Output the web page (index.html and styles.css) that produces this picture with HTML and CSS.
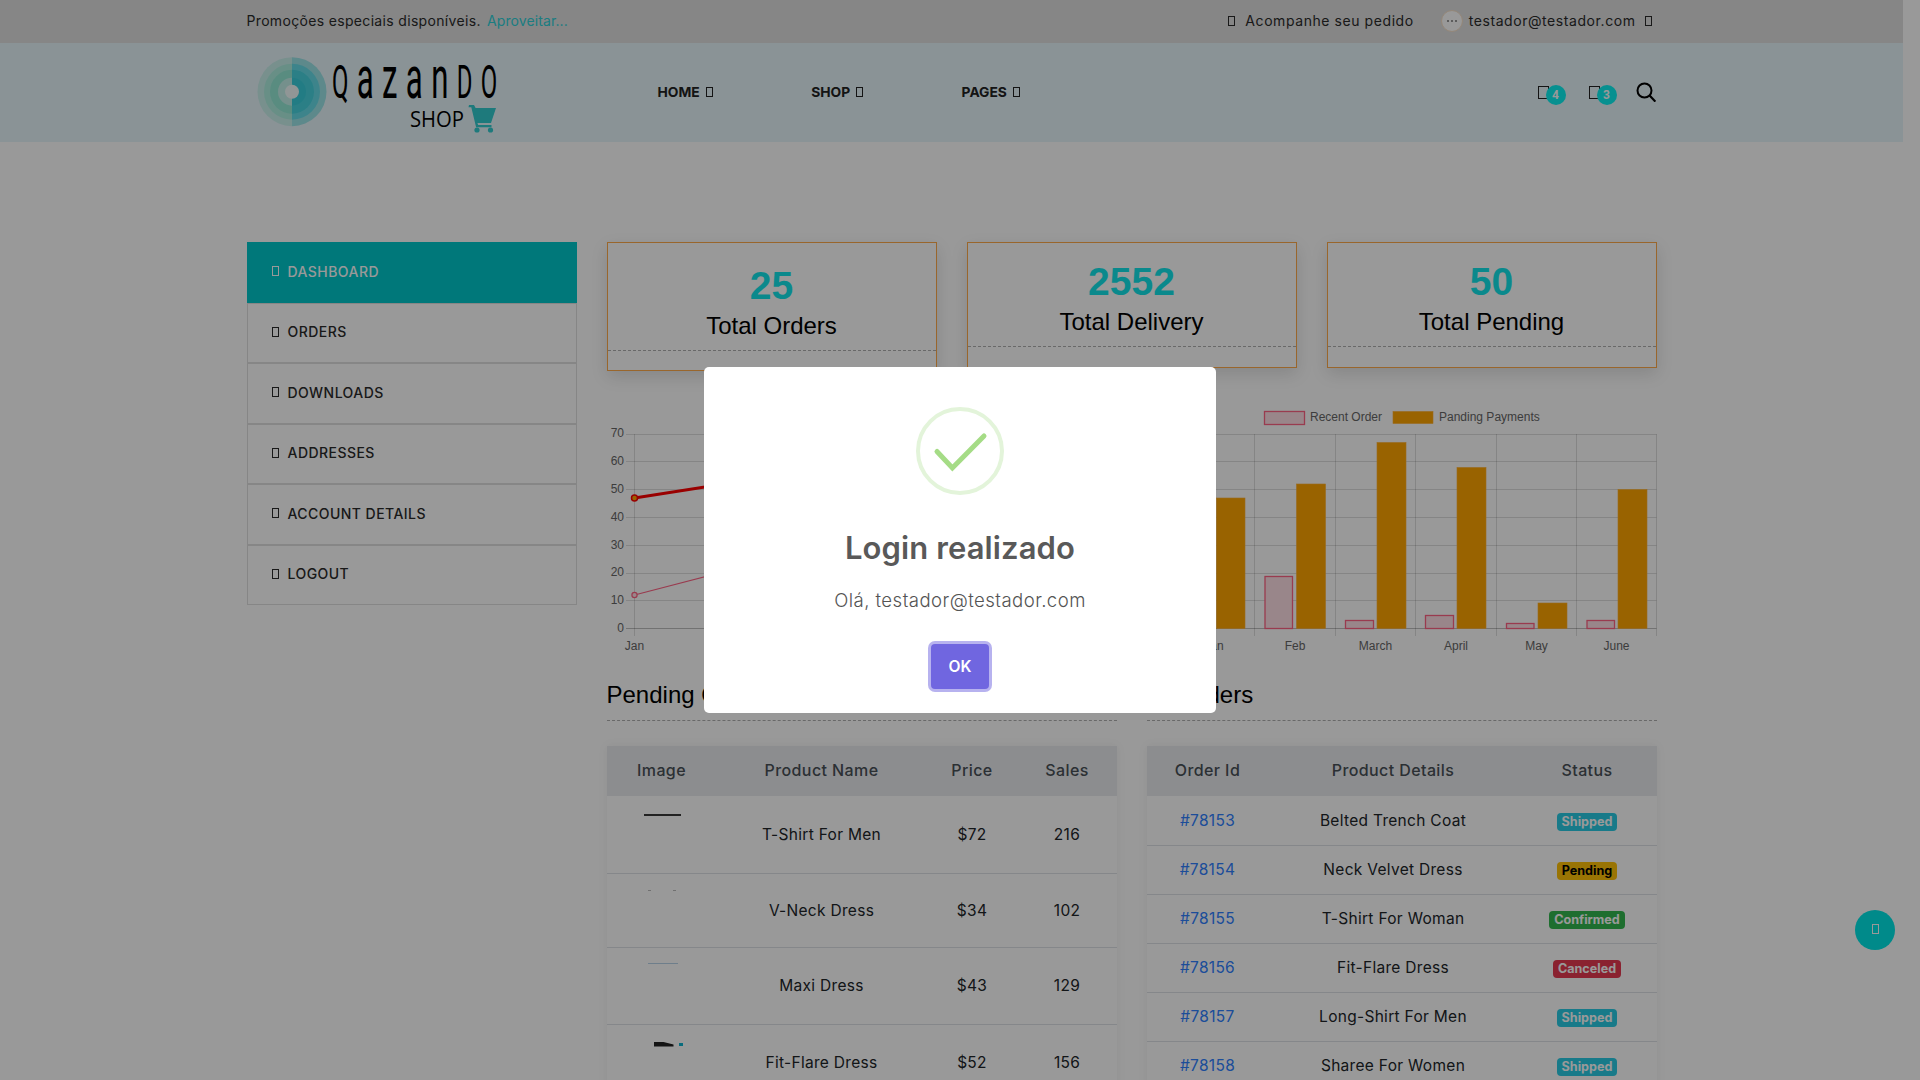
FILE: index.html
```html
<!DOCTYPE html>
<html lang="pt-BR">
<head>
<meta charset="utf-8">
<title>Qazando Shop - Dashboard</title>
<link rel="stylesheet" href="styles.css">
</head>
<body>
<div class="page">
  <div class="topbar">
    <div class="container topbar-row">
      <p class="promo">Promoções especiais disponíveis. <a class="promo-link">Aproveitar...</a></p>
      <div class="top-right">
        <span class="top-item"><i class="tofu"></i>Acompanhe seu pedido</span>
        <span class="top-item user"><span class="avatar"><b></b></span>testador@testador.com<i class="tofu"></i></span>
      </div>
    </div>
  </div>
  <header class="header">
    <div class="container header-row">
      <a class="logo">
        <svg class="logo-svg" viewBox="250 50 260 90" width="260" height="90">
          <defs>
            <clipPath id="halfL"><rect x="250" y="50" width="42" height="90"/></clipPath>
            <clipPath id="halfR"><rect x="292" y="50" width="50" height="90"/></clipPath>
          </defs>
          <g clip-path="url(#halfL)">
            <circle class="l1" cx="292" cy="91.7" r="34.5"/><circle class="l2" cx="292" cy="91.7" r="28"/><circle class="l3" cx="292" cy="91.7" r="22"/><circle class="l4" cx="292" cy="91.7" r="14"/><circle class="l5" cx="292" cy="91.7" r="7"/>
          </g>
          <g clip-path="url(#halfR)">
            <circle class="r1" cx="292" cy="91.7" r="34.5"/><circle class="r2" cx="292" cy="91.7" r="28"/><circle class="r3" cx="292" cy="91.7" r="22"/><circle class="r4" cx="292" cy="91.7" r="14"/><circle class="l5" cx="292" cy="91.7" r="7"/>
          </g>
          <g transform="translate(332 98) scale(.52 1)">
            <text class="logo-word"><tspan class="cap">Q</tspan><tspan class="low">aza</tspan><tspan class="low">n</tspan><tspan class="cap">DO</tspan></text>
          </g>
          <text class="logo-shop" x="410" y="127" textLength="54" lengthAdjust="spacingAndGlyphs">SHOP</text>
          <path class="logo-cart" d="M469 105h5l1.6 3h20.4l-5 15h-13.6l.8 2h13.3v2.2h-15.4l-4.8-20h-2.8z"/>
          <circle class="logo-cart" cx="477" cy="130" r="2.6"/><circle class="logo-cart" cx="490.5" cy="130" r="2.6"/>
        </svg>
      </a>
      <nav class="nav">
        <a class="nav-item">HOME<i class="tofu"></i></a>
        <a class="nav-item">SHOP<i class="tofu"></i></a>
        <a class="nav-item">PAGES<i class="tofu"></i></a>
      </nav>
      <div class="tools">
        <span class="tool"><i class="tofu tofu-lg"></i><b class="count">4</b></span>
        <span class="tool"><i class="tofu tofu-lg"></i><b class="count">3</b></span>
        <svg class="search" viewBox="0 0 20 20" width="20" height="20"><circle cx="8.5" cy="8.5" r="7" fill="none" stroke="#000" stroke-width="2"/><path d="M13.6 13.6 19.4 19.6" stroke="#000" stroke-width="2.2" fill="none"/></svg>
      </div>
    </div>
  </header>

  <main class="container dash">
    <aside class="side">
      <a class="side-item active"><i class="tofu"></i>DASHBOARD</a>
      <a class="side-item"><i class="tofu"></i>ORDERS</a>
      <a class="side-item"><i class="tofu"></i>DOWNLOADS</a>
      <a class="side-item"><i class="tofu"></i>ADDRESSES</a>
      <a class="side-item"><i class="tofu"></i>ACCOUNT DETAILS</a>
      <a class="side-item"><i class="tofu"></i>LOGOUT</a>
    </aside>
    <section class="content">
      <div class="cards">
        <div class="card card-first"><div class="card-body"><h2>25</h2><h3>Total Orders</h3></div></div>
        <div class="card"><div class="card-body"><h2>2552</h2><h3>Total Delivery</h3></div></div>
        <div class="card"><div class="card-body"><h2>50</h2><h3>Total Pending</h3></div></div>
      </div>

      <div class="charts">
        <svg class="chart" viewBox="607 400 510 260" width="510" height="260">
          <g class="grid">
            <path d="M626 434.5H1117M626 461.5H1117M626 489.5H1117M626 517.5H1117M626 545.5H1117M626 573.5H1117M626 600.5H1117"/>
            <path d="M634.5 434V636M1117 434V636"/>
          </g>
          <path class="axis" d="M626 628.5H1117"/>
          <g class="ticks">
            <text x="624" y="437">70</text><text x="624" y="465">60</text><text x="624" y="493">50</text><text x="624" y="521">40</text><text x="624" y="549">30</text><text x="624" y="576">20</text><text x="624" y="604">10</text><text x="624" y="632">0</text>
          </g>
          <text class="xlabel" x="634.5" y="650">Jan</text>
          <path class="line-pink" d="M634.5 595 L800 552"/>
          <circle class="pt-pink" cx="634.5" cy="595" r="2.6"/>
          <path class="line-red" d="M634.5 498 L800 472"/>
          <circle class="pt-red" cx="634.5" cy="498" r="3"/>
        </svg>
        <svg class="chart" viewBox="1147 400 510 260" width="510" height="260">
          <rect class="leg-pink" x="1264.5" y="411.5" width="40" height="13"/>
          <text class="legend" x="1310" y="421">Recent Order</text>
          <rect class="bar-orange" x="1393" y="411.5" width="40" height="12"/>
          <text class="legend" x="1439" y="421">Panding Payments</text>
          <g class="grid">
            <path d="M1167 434.5H1656.5M1167 461.5H1656.5M1167 489.5H1656.5M1167 517.5H1656.5M1167 545.5H1656.5M1167 573.5H1656.5M1167 600.5H1656.5"/>
            <path d="M1174.5 434V636M1254.5 434V636M1335.5 434V636M1415.5 434V636M1496.5 434V636M1576.5 434V636M1656.5 434V636"/>
          </g>
          <path class="axis" d="M1167 628.5H1656.5"/>
          <rect class="bar-pink" x="1185" y="595" width="28" height="33.5"/>
          <rect class="bar-orange" x="1216.5" y="498" width="28.5" height="130.5"/>
          <rect class="bar-pink" x="1265" y="576.5" width="27.5" height="52"/>
          <rect class="bar-orange" x="1296.5" y="484" width="29" height="144.5"/>
          <rect class="bar-pink" x="1345.5" y="620.5" width="28" height="8"/>
          <rect class="bar-orange" x="1377" y="442.5" width="29" height="186"/>
          <rect class="bar-pink" x="1425.5" y="615.5" width="28" height="13"/>
          <rect class="bar-orange" x="1457" y="467.5" width="29" height="161"/>
          <rect class="bar-pink" x="1506.5" y="623.5" width="27.5" height="5"/>
          <rect class="bar-orange" x="1538" y="603" width="29" height="25.5"/>
          <rect class="bar-pink" x="1587" y="620.5" width="27.5" height="8"/>
          <rect class="bar-orange" x="1618" y="489.5" width="29" height="139"/>
          <text class="xlabel" x="1214" y="650">Jan</text><text class="xlabel" x="1295" y="650">Feb</text><text class="xlabel" x="1375.5" y="650">March</text><text class="xlabel" x="1456" y="650">April</text><text class="xlabel" x="1536.5" y="650">May</text><text class="xlabel" x="1616.5" y="650">June</text>
        </svg>
      </div>

      <div class="tables">
        <div class="panel">
          <h4 class="panel-title">Pending Orders</h4>
          <table class="tbl tbl-products">
            <colgroup><col class="c-img"><col class="c-name"><col class="c-price"><col class="c-sales"></colgroup>
            <thead><tr><th>Image</th><th>Product Name</th><th>Price</th><th>Sales</th></tr></thead>
            <tbody>
              <tr class="r-a"><td class="thumb"><i class="stub stub-dark"></i></td><td>T-Shirt For Men</td><td>$72</td><td>216</td></tr>
              <tr class="r-b"><td class="thumb"><i class="stub stub-dots"></i></td><td>V-Neck Dress</td><td>$34</td><td>102</td></tr>
              <tr class="r-c"><td class="thumb"><i class="stub stub-blue"></i></td><td>Maxi Dress</td><td>$43</td><td>129</td></tr>
              <tr class="r-c"><td class="thumb"><i class="stub stub-wedge"></i><i class="stub stub-dot"></i></td><td>Fit-Flare Dress</td><td>$52</td><td>156</td></tr>
            </tbody>
          </table>
        </div>
        <div class="panel">
          <h4 class="panel-title">All Orders</h4>
          <table class="tbl tbl-orders">
            <colgroup><col class="c-id"><col class="c-det"><col class="c-st"></colgroup>
            <thead><tr><th>Order Id</th><th>Product Details</th><th>Status</th></tr></thead>
            <tbody>
              <tr><td><a class="oid">#78153</a></td><td>Belted Trench Coat</td><td><span class="badge b-info">Shipped</span></td></tr>
              <tr><td><a class="oid">#78154</a></td><td>Neck Velvet Dress</td><td><span class="badge b-warn">Pending</span></td></tr>
              <tr><td><a class="oid">#78155</a></td><td>T-Shirt For Woman</td><td><span class="badge b-ok">Confirmed</span></td></tr>
              <tr><td><a class="oid">#78156</a></td><td>Fit-Flare Dress</td><td><span class="badge b-bad">Canceled</span></td></tr>
              <tr><td><a class="oid">#78157</a></td><td>Long-Shirt For Men</td><td><span class="badge b-info">Shipped</span></td></tr>
              <tr><td><a class="oid">#78158</a></td><td>Sharee For Women</td><td><span class="badge b-info">Shipped</span></td></tr>
            </tbody>
          </table>
        </div>
      </div>
    </section>
  </main>
  <a class="to-top"><i class="tofu"></i></a>
</div>

<div class="overlay">
  <div class="modal">
    <svg class="success" viewBox="0 0 88 88" width="88" height="88">
      <circle cx="44" cy="44" r="42" fill="none" stroke="#e3f4da" stroke-width="4"/>
      <path d="M21 44.5 L36.4 61 L68 29" fill="none" stroke="#a5dc86" stroke-width="5" stroke-linecap="round" stroke-linejoin="miter"/>
    </svg>
    <h2 class="modal-title">Login realizado</h2>
    <p class="modal-text">Olá, testador@testador.com</p>
    <button class="ok">OK</button>
  </div>
</div>
</body>
</html>
```

FILE: styles.css
```css
* { box-sizing: border-box; }
html, body { margin: 0; height: 100%; overflow: hidden; background: #fff; }
body { font-family: Inter, "Noto Sans", sans-serif; color: #333; }
h2, h3, h4, p { margin: 0; font-weight: 400; }
.page { width: 1903px; height: 1080px; overflow: hidden; position: relative; }
.container { width: 1410px; margin: 0 auto; }

.tofu { display: inline-block; width: 7px; height: 10px; border: 1px solid currentColor; flex: none; }
.tofu-lg { width: 11px; height: 13px; }

.topbar { height: 43px; background: #dfdfdf; font-size: 14px; letter-spacing: .33px; }
.topbar-row { height: 100%; display: flex; align-items: center; justify-content: space-between; padding-bottom: 2px; }
.promo { color: #2b2b2b; }
.promo-link { color: #2ed0d8; margin-left: 2px; letter-spacing: .1px; }
.top-right { display: flex; align-items: center; gap: 27px; padding-right: 5px; color: #2b2b2b; letter-spacing: .57px; }
.top-item { display: flex; align-items: center; gap: 10px; }
.user { gap: 6px; }
.user .tofu { margin-left: 3px; }
.avatar { flex: none; width: 22px; height: 22px; border-radius: 50%; background: #fff; border: 1px solid #f6e0c8; display: flex; align-items: center; justify-content: center; }
.avatar b { width: 10px; height: 2px; border-top: 2px dotted #999; }

.header { height: 99px; background: #e6f5fa; }
.header-row { height: 100%; display: flex; align-items: center; }
.logo { flex: 0 0 411px; height: 90px; margin-top: 5px; padding-left: 3px; }
.logo-svg { display: block; overflow: visible; }
.l1 { fill: #c8f0ec; } .l2 { fill: #aeeee0; } .l3 { fill: #94ead6; } .l4 { fill: #c4f0ea; } .l5 { fill: #f0fbfa; }
.r1 { fill: #9ce4e8; } .r2 { fill: #67dde8; } .r3 { fill: #48d4e0; } .r4 { fill: #3acfdc; }
.logo-word { font-family: Roboto, sans-serif; font-weight: 400; fill: #000; }
.logo-word .cap { font-size: 46px; }
.logo-word .low { font-size: 60px; }
.logo-word tspan { letter-spacing: 16px; }
.logo-shop { font-family: "Open Sans", sans-serif; font-size: 22px; fill: #000; }
.logo-cart { fill: #32cbcf; }
.nav { display: flex; gap: 98.5px; padding-bottom: 2px; }
.nav-item { display: flex; align-items: center; gap: 6px; font-weight: 700; font-size: 13.8px; color: #222; }
.tools { margin-left: auto; display: flex; align-items: center; gap: 23px; padding-right: 1px; }
.tool { display: flex; position: relative; width: 28px; height: 20px; color: #222; }
.tool .tofu { margin-top: 3px; }
.count { position: absolute; left: 8px; top: 2px; width: 20px; height: 20px; border-radius: 50%; background: #0cf0f0; color: #fff; font-family: Roboto, sans-serif; font-size: 12px; font-weight: 700; display: flex; align-items: center; justify-content: center; }
.search { margin-left: -4px; margin-top: -2px; }

.dash { display: flex; gap: 30px; padding-top: 100px; align-items: flex-start; }
.side { flex: 0 0 330px; }
.side-item { display: flex; align-items: center; gap: 9px; height: 60.5px; padding: 0 0 2px 24px; border: 1px solid rgba(0,0,0,.12); font-size: 14px; letter-spacing: .45px; font-weight: 500; color: #2b2b2b; }
.side-item.active { background: #00c8cc; border-color: #00c8cc; color: #fff; }

.content { flex: 0 0 1050px; width: 1050px; }
.cards { display: flex; gap: 30px; align-items: flex-start; }
.card { flex: 1; border: 1px solid #ffab4a; box-shadow: 0 6px 16px rgba(0,0,0,.12); padding: 17px 0 20px; text-align: center; font-family: "Liberation Sans", Arial, sans-serif; }
.card-first { padding-top: 21px; padding-bottom: 19px; }
.card-body { border-bottom: 1px dashed #b0b0b0; padding-bottom: 6px; }
.card h2 { font-size: 39px; line-height: 44px; font-weight: 700; color: #12e5ea; }
.card h3 { font-size: 24px; line-height: 36px; color: #000; }

.charts { display: flex; gap: 30px; margin-top: 29px; }
.chart { display: block; font-family: "Liberation Sans", Arial, sans-serif; }
.grid path { fill: none; stroke: rgba(0,0,0,.13); stroke-width: 1; }
.axis { fill: none; stroke: rgba(0,0,0,.25); stroke-width: 1; }
.ticks text { font-size: 12px; fill: #666; text-anchor: end; }
.xlabel { font-size: 12px; fill: #666; text-anchor: middle; }
.legend { font-size: 12px; fill: #666; }
.line-red { fill: none; stroke: #f00; stroke-width: 3; }
.pt-red { fill: #ffa500; stroke: #f00; stroke-width: 1.5; }
.line-pink { fill: none; stroke: #ff6384; stroke-width: 1.2; }
.pt-pink { fill: #ffe0e6; stroke: #ff6384; stroke-width: 1.2; }
.bar-pink, .leg-pink { fill: #ffe0e6; stroke: #ff6384; stroke-width: 1.3; }
.bar-orange { fill: #ffa500; stroke: #ffb030; stroke-width: .6; }

.tables { display: flex; gap: 30px; margin-top: 20px; }
.panel { flex: 1; min-width: 0; }
.panel-title { font-family: "Liberation Sans", Arial, sans-serif; font-size: 24px; line-height: 30px; padding-bottom: 10px; border-bottom: 1px dashed #b0b0b0; margin-bottom: 25px; color: #000; }
.tbl { width: 100%; border-collapse: collapse; table-layout: fixed; box-shadow: 0 0 10px rgba(0,0,0,.06); font-size: 15.5px; letter-spacing: .3px; text-align: center; color: #212529; }
.tbl th { height: 50px; background: #e9ecef; font-weight: 500; color: #495057; font-size: 16px; letter-spacing: .4px; padding: 0 0 3px; }
.tbl td { padding: 0; border-bottom: 1px solid #dee2e6; height: 49px; }
.c-img { width: 110px; } .c-name { width: 210px; } .c-price { width: 91px; } .c-sales { width: 99px; }
.c-id { width: 122px; } .c-det { width: 249px; } .c-st { width: 139px; }
.tbl .r-a td { height: 77px; }
.tbl .r-b td { height: 74px; }
.tbl .r-c td { height: 77px; }
.thumb { position: relative; }
.stub { position: absolute; display: block; }
.stub-dark { left: 37px; top: 18px; width: 37px; height: 2px; background: #3a3a3a; }
.stub-dots { left: 41px; width: 28px; height: 1px; top: 16px; border-left: 3px solid #bbb; border-right: 3px solid #bbb; }
.stub-blue { left: 41px; width: 30px; height: 1px; top: 15px; background: #b8d2e8; }
.stub-wedge { left: 47px; width: 20px; height: 5px; top: 17px; background: #222; clip-path: polygon(0 0, 50% 10%, 100% 60%, 100% 100%, 0 100%); }
.stub-dot { left: 72px; top: 18px; width: 4px; height: 3px; background: #10b4d0; }
.oid { color: #2f80ff; }
.badge { display: inline-block; min-width: 60px; height: 18px; padding: 0 5px; border-radius: 4px; font-size: 12.6px; letter-spacing: 0; font-weight: 700; line-height: 18px; color: #fff; vertical-align: middle; position: relative; top: 1px; }
.b-info { background: #28cce4; }
.b-warn { background: #ffc107; color: #000; }
.b-ok { background: #32b84f; }
.b-bad { background: #e63950; }

.to-top { position: absolute; right: 8px; top: 910px; width: 40px; height: 40px; border-radius: 50%; background: #00e6e6; color: #fff; display: flex; align-items: center; justify-content: center; }
.to-top .tofu { margin-top: -2px; }

.overlay { position: fixed; inset: 0; z-index: 10; background: rgba(0,0,0,.4); display: flex; align-items: center; justify-content: center; }
.modal { width: 512px; height: 346px; background: #fff; border-radius: 5px; display: flex; flex-direction: column; align-items: center; padding-top: 40px; }
.success { display: block; flex: none; }
.modal-title { font-size: 31px; letter-spacing: .1px; line-height: 36px; font-weight: 600; color: #595959; margin-top: 35px; }
.modal-text { font-size: 18.6px; letter-spacing: .45px; line-height: 27px; color: #545454; margin-top: 21px; font-weight: 300; }
.ok { margin-top: 30px; width: 58px; height: 45px; border: 0; border-radius: 4px; background: #7066e0; color: #fff; font: 600 15.6px Inter, sans-serif; box-shadow: 0 0 0 3px rgba(112,102,224,.5); padding: 0; }
```
